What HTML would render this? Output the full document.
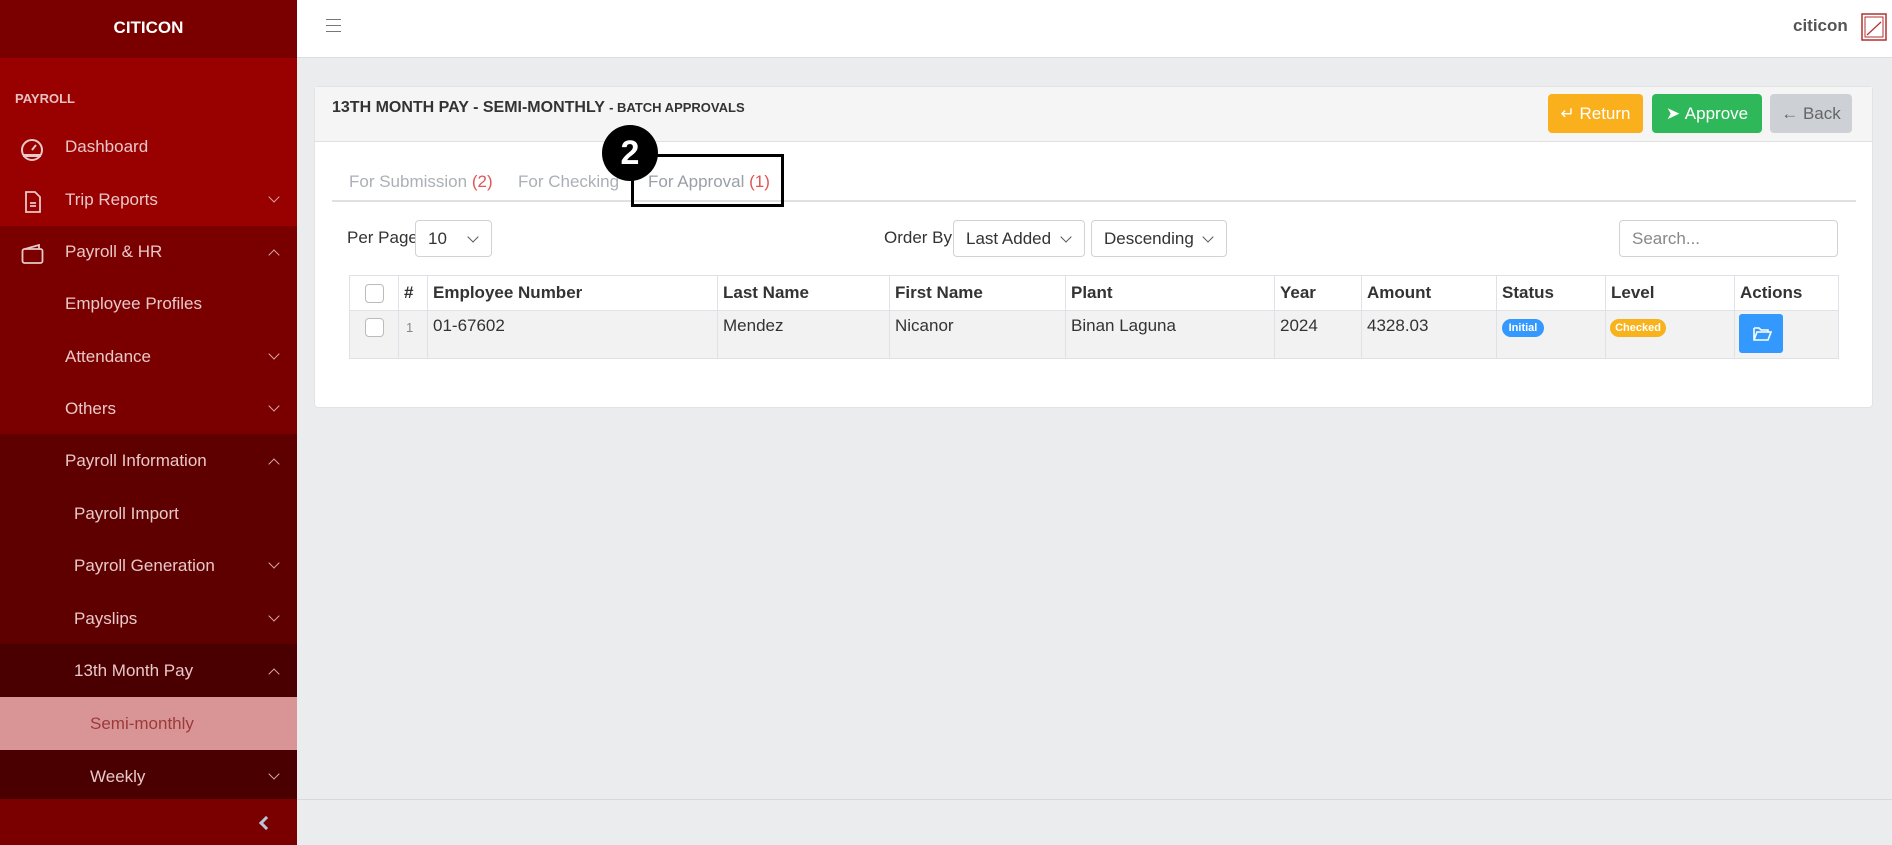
<!DOCTYPE html>
<html><head><meta charset="utf-8"><style>
*{box-sizing:border-box;margin:0;padding:0}
body{width:1892px;height:845px;overflow:hidden;font-family:"Liberation Sans",sans-serif;background:#ebecee;position:relative}
.a{position:absolute}
.sb{left:0;top:0;width:297px;height:845px;background:#7a0000}
.it{position:absolute;left:0;color:#e8c8c8;font-size:17px;line-height:20px}
.dn,.up{position:absolute;left:270px;width:8px;height:8px;border-right:1.3px solid #d8a8a8;border-bottom:1.3px solid #d8a8a8}
.dn{transform:rotate(45deg)}
.up{transform:rotate(-135deg)}
.btn{position:absolute;top:94px;height:39px;border-radius:4px;color:#fff;font-size:17px;display:flex;align-items:center;justify-content:center}
.sel{position:absolute;top:220px;height:37px;border:1px solid #cfd2d6;border-radius:4px;background:#fff;font-size:17px;color:#333;padding-left:12px;line-height:35px}
.sel.ch:after{content:"";position:absolute;right:14px;top:12px;width:7px;height:7px;border-right:1.5px solid #555;border-bottom:1.5px solid #555;transform:rotate(45deg)}
.tbl{left:349px;top:275px;width:1490px;height:84px;border:1px solid #dee2e6;background:#fff}
.c{position:absolute;font-size:17px;color:#333}
.vl{position:absolute;top:0;width:1px;height:82px;background:#dee2e6}
.cb{position:absolute;left:15px;width:19px;height:19px;border:1px solid #bbb;border-radius:4px;background:#fff}
</style></head><body>
<div class="a sb"></div>
<div class="a" style="left:0;top:58px;width:297px;height:168px;background:#990000"></div>
<div class="a" style="left:0;top:434px;width:297px;height:210px;background:#5e0000"></div>
<div class="a" style="left:0;top:644px;width:297px;height:155px;background:#4a0000"></div>
<div class="a" style="left:0;top:697px;width:297px;height:53px;background:#d99595"></div>
<div class="a" style="left:0;top:18px;width:297px;text-align:center;color:#fff;font-weight:bold;font-size:17px">CITICON</div>
<div class="a" style="left:15px;top:91px;color:#e8c0c0;font-weight:bold;font-size:13px">PAYROLL</div>
<svg class="a" style="left:20px;top:139px" width="24" height="22" viewBox="0 0 24 22"><circle cx="12" cy="11" r="10" fill="none" stroke="#e8c8c8" stroke-width="2"/><path d="M3 15h18v3H3z" fill="#e8c8c8"/><path d="M12 11l4-5" stroke="#e8c8c8" stroke-width="2"/></svg>
<svg class="a" style="left:24px;top:190px" width="18" height="24" viewBox="0 0 18 24"><path d="M2 2h9l5 5v15H2z M6 13h6M6 16h6" fill="none" stroke="#e8c8c8" stroke-width="1.8"/></svg>
<svg class="a" style="left:21px;top:244px" width="24" height="20" viewBox="0 0 24 20"><rect x="1.5" y="5" width="20" height="14" rx="2" fill="none" stroke="#e8c8c8" stroke-width="1.8"/><path d="M4 5l14-4v4" fill="none" stroke="#e8c8c8" stroke-width="1.8"/></svg>
<div class="it" style="top:137px;left:65px">Dashboard</div>
<div class="it" style="top:190px;left:65px">Trip Reports</div><div class="dn" style="top:193px"></div>
<div class="it" style="top:242px;left:65px">Payroll &amp; HR</div><div class="up" style="top:251px"></div>
<div class="it" style="top:294px;left:65px">Employee Profiles</div>
<div class="it" style="top:347px;left:65px">Attendance</div><div class="dn" style="top:350px"></div>
<div class="it" style="top:399px;left:65px">Others</div><div class="dn" style="top:402px"></div>
<div class="it" style="top:451px;left:65px">Payroll Information</div><div class="up" style="top:460px"></div>
<div class="it" style="top:504px;left:74px">Payroll Import</div>
<div class="it" style="top:556px;left:74px">Payroll Generation</div><div class="dn" style="top:559px"></div>
<div class="it" style="top:609px;left:74px">Payslips</div><div class="dn" style="top:612px"></div>
<div class="it" style="top:661px;left:74px">13th Month Pay</div><div class="up" style="top:670px"></div>
<div class="it" style="top:714px;left:90px;color:#9c3a3a">Semi-monthly</div>
<div class="it" style="top:767px;left:90px">Weekly</div><div class="dn" style="top:770px"></div>
<div class="a" style="left:261px;top:818px;width:10px;height:10px;border-left:3px solid #b8c4d8;border-bottom:3px solid #b8c4d8;transform:rotate(45deg)"></div>

<div class="a" style="left:297px;top:0;width:1595px;height:58px;background:#fff;border-bottom:1px solid #dcdde0"></div>
<div class="a" style="left:326px;top:19px;width:15px;height:1px;background:#777;box-shadow:0 6px 0 #777,0 12px 0 #777"></div>
<div class="a" style="left:1793px;top:16px;color:#555;font-weight:bold;font-size:17px">citicon</div>
<svg class="a" style="left:1861px;top:13px" width="26" height="28"><rect x="1" y="1" width="24" height="26" fill="none" stroke="#b03030" stroke-width="1.5"/><rect x="4" y="4" width="18" height="20" fill="none" stroke="#b03030" stroke-width="1"/><path d="M6 22L20 9" stroke="#b03030" stroke-width="1.2"/></svg>
<div class="a" style="left:297px;top:799px;width:1595px;height:1px;background:#d8d9dc"></div>

<div class="a" style="left:314px;top:86px;width:1559px;height:322px;background:#fff;border:1px solid #e2e3e5;border-radius:4px"></div>
<div class="a" style="left:315px;top:87px;width:1557px;height:55px;background:#f5f5f5;border-bottom:1px solid #e0e0e0"></div>
<div class="a" style="left:332px;top:99px;color:#333;font-weight:bold;font-size:16px">13TH MONTH PAY - SEMI-MONTHLY <span style="font-size:13px">- BATCH APPROVALS</span></div>
<div class="btn" style="left:1548px;width:95px;background:#fab01c">&#8629; Return</div>
<div class="btn" style="left:1652px;width:110px;background:#2fb85a">&#10148;&nbsp;Approve</div>
<div class="btn" style="left:1770px;width:82px;background:#cdd0d5;color:#666">&#8592; Back</div>

<div class="a" style="left:349px;top:172px;font-size:17px;color:#aab0b6">For Submission <span style="color:#e05555">(2)</span></div>
<div class="a" style="left:518px;top:172px;font-size:17px;color:#aab0b6">For Checking</div>
<div class="a" style="left:648px;top:172px;font-size:17px;color:#9aa0a6">For Approval <span style="color:#e05555">(1)</span></div>
<div class="a" style="left:332px;top:200px;width:1524px;height:2px;background:#dee0e3"></div>
<div class="a" style="left:631px;top:154px;width:153px;height:53px;border:3px solid #000"></div>
<div class="a" style="left:602px;top:125px;width:56px;height:56px;border-radius:50%;background:#000;color:#fff;font-weight:bold;font-size:34px;text-align:center;line-height:56px">2</div>

<div class="a" style="left:347px;top:228px;font-size:17px;color:#333">Per Page</div>
<div class="sel ch" style="left:415px;width:77px">10</div>
<div class="a" style="left:884px;top:228px;font-size:17px;color:#333">Order By</div>
<div class="sel ch" style="left:953px;width:132px">Last Added</div>
<div class="sel ch" style="left:1091px;width:136px">Descending</div>
<div class="sel" style="left:1619px;width:219px;color:#888">Search...</div>

<div class="a tbl">
<div style="position:absolute;left:0;top:34px;width:1488px;height:48px;background:#f2f2f2;border-top:1px solid #dee2e6"></div>
<div class="vl" style="left:48px"></div><div class="vl" style="left:77px"></div><div class="vl" style="left:367px"></div><div class="vl" style="left:539px"></div><div class="vl" style="left:715px"></div><div class="vl" style="left:924px"></div><div class="vl" style="left:1011px"></div><div class="vl" style="left:1146px"></div><div class="vl" style="left:1255px"></div><div class="vl" style="left:1384px"></div>
<div class="cb" style="top:8px"></div><div class="cb" style="top:42px"></div>
<div class="c" style="left:54px;top:7px;font-weight:bold">#</div>
<div class="c" style="left:56px;top:44px;font-size:13px;color:#888">1</div>
<div class="c" style="left:83px;top:7px;font-weight:bold">Employee Number</div>
<div class="c" style="left:373px;top:7px;font-weight:bold">Last Name</div>
<div class="c" style="left:545px;top:7px;font-weight:bold">First Name</div>
<div class="c" style="left:721px;top:7px;font-weight:bold">Plant</div>
<div class="c" style="left:930px;top:7px;font-weight:bold">Year</div>
<div class="c" style="left:1017px;top:7px;font-weight:bold">Amount</div>
<div class="c" style="left:1152px;top:7px;font-weight:bold">Status</div>
<div class="c" style="left:1261px;top:7px;font-weight:bold">Level</div>
<div class="c" style="left:1390px;top:7px;font-weight:bold">Actions</div>
<div class="c" style="left:83px;top:40px">01-67602</div>
<div class="c" style="left:373px;top:40px">Mendez</div>
<div class="c" style="left:545px;top:40px">Nicanor</div>
<div class="c" style="left:721px;top:40px">Binan Laguna</div>
<div class="c" style="left:930px;top:40px">2024</div>
<div class="c" style="left:1017px;top:40px">4328.03</div>
<div class="c" style="left:1152px;top:43px;width:42px;height:18px;border-radius:9px;background:#3399ff;color:#fff;font-size:11px;font-weight:bold;text-align:center;line-height:18px">Initial</div>
<div class="c" style="left:1260px;top:43px;width:56px;height:18px;border-radius:9px;background:#f8b21c;color:#fff;font-size:11px;font-weight:bold;text-align:center;line-height:18px">Checked</div>
<div class="c" style="left:1389px;top:38px;width:44px;height:39px;border-radius:3px;background:#3399ff"><svg width="44" height="39"><path d="M15 14h5l2 2h7v2M15 14v12h14l3-8H18l-3 8" fill="none" stroke="#fff" stroke-width="1.6"/></svg></div>
</div>
</body></html>
